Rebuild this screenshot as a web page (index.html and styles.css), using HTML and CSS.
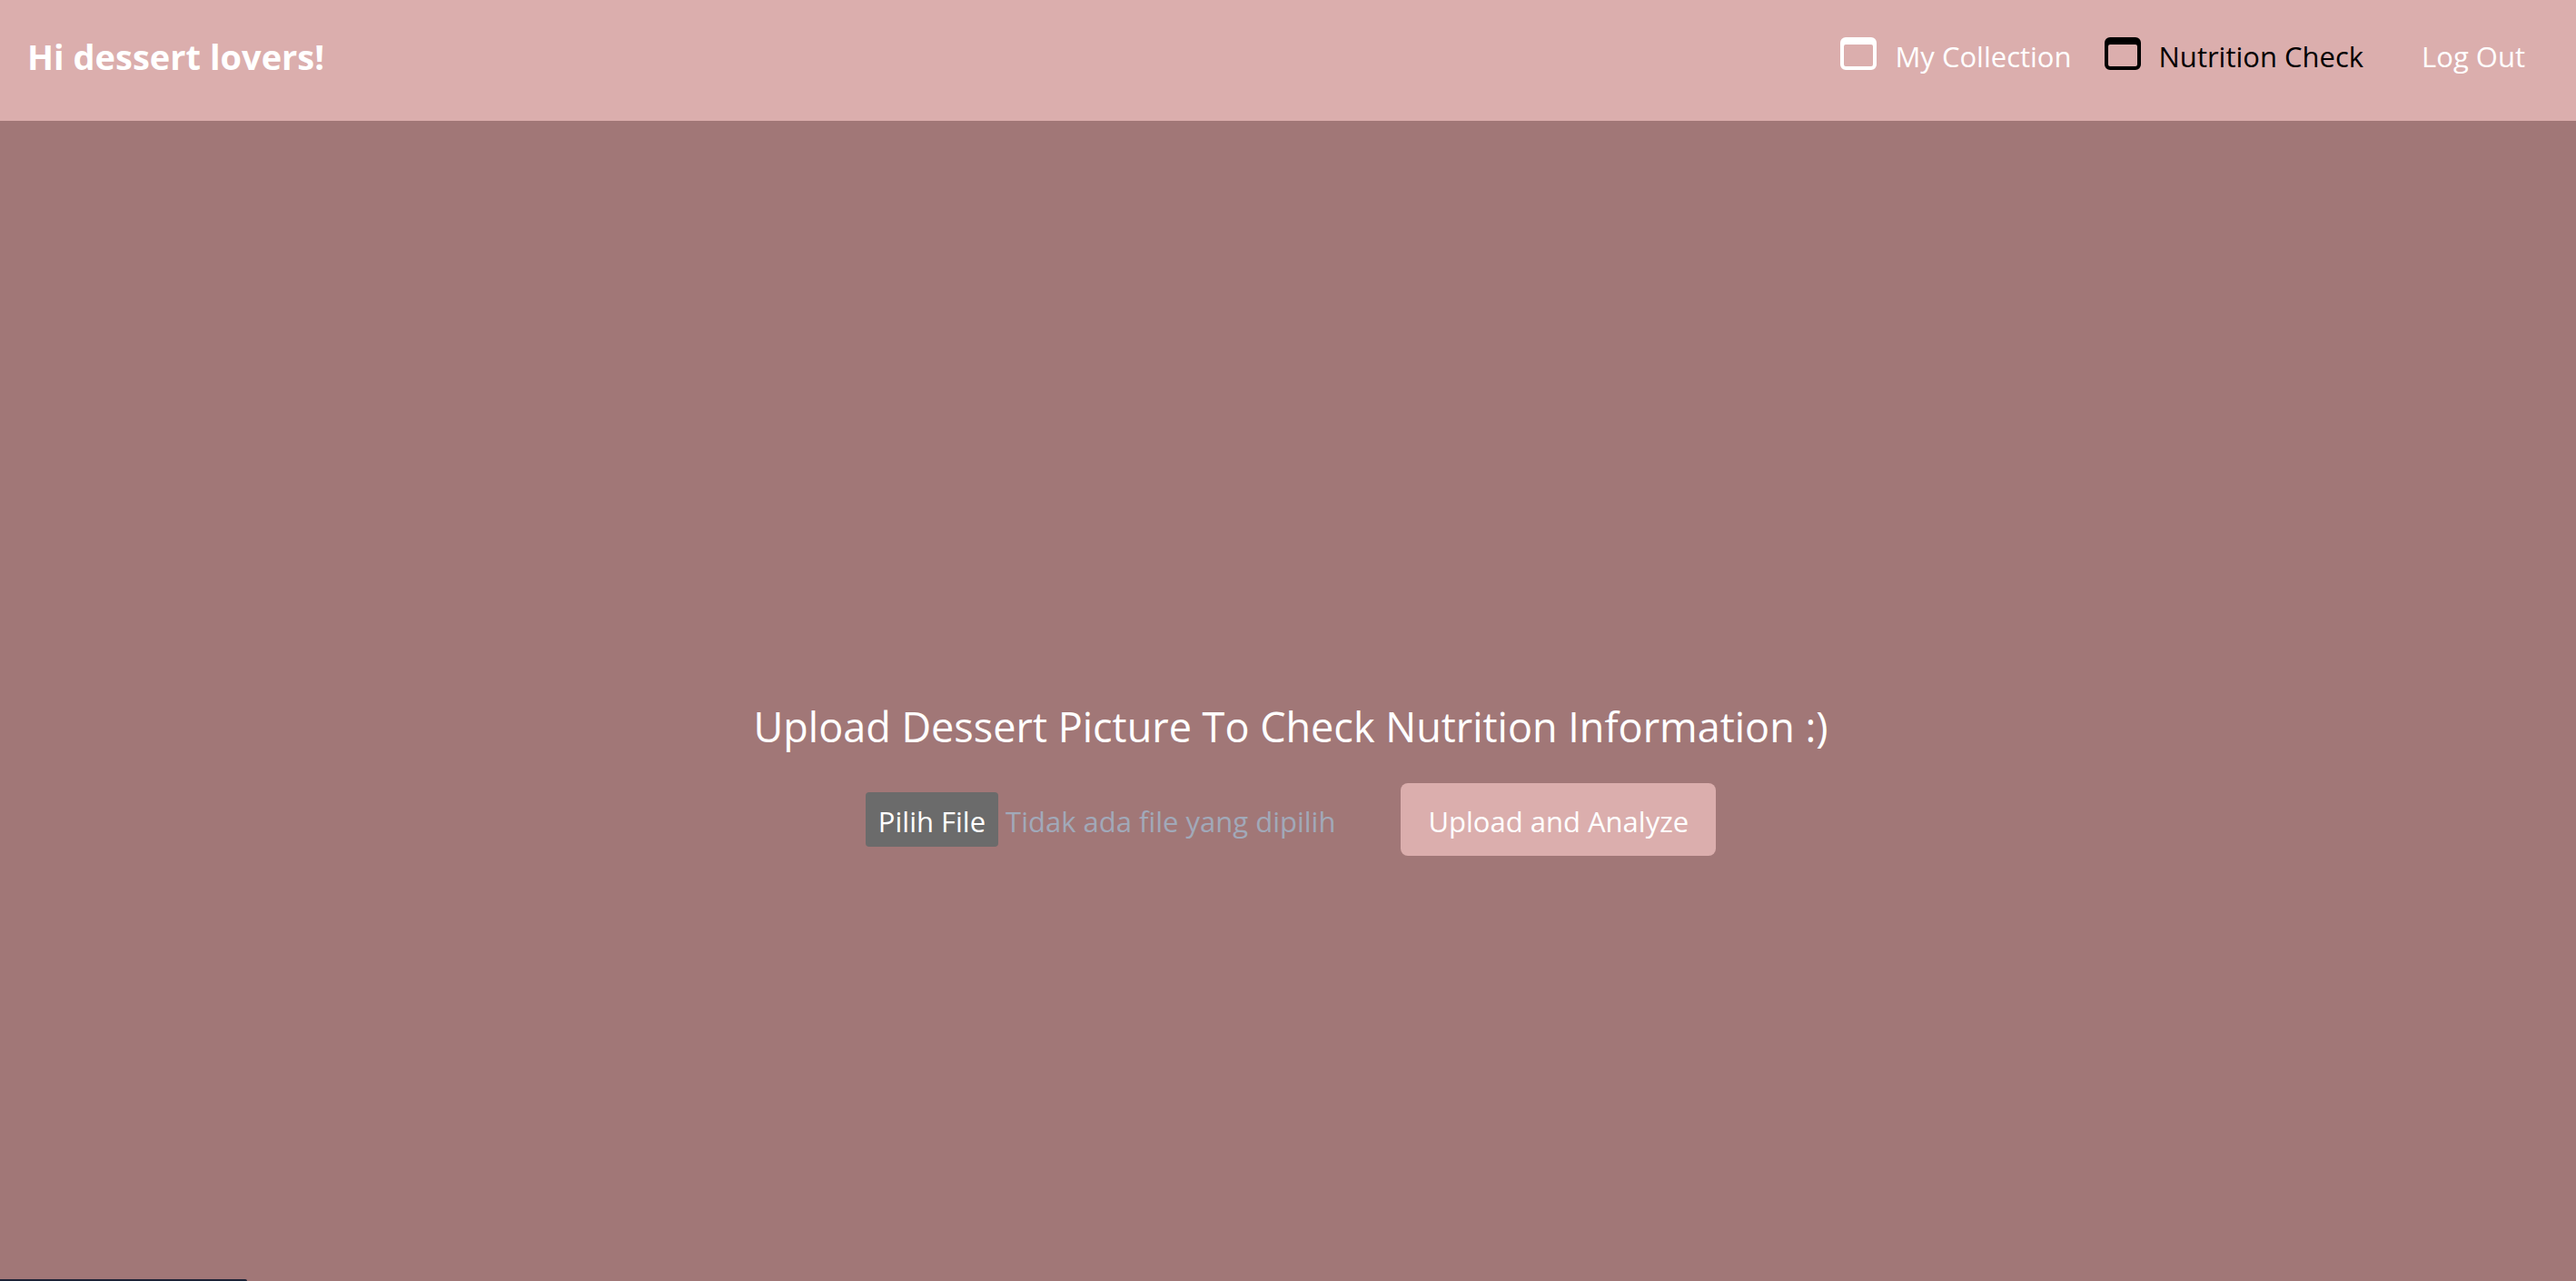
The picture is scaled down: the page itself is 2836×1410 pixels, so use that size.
FILE: index.html
```html
<!DOCTYPE html>
<html lang="en">
<head>
<meta charset="utf-8">
<meta name="viewport" content="width=device-width, initial-scale=1">
<title>Nutrition Check</title>
<link rel="stylesheet" href="styles.css">
</head>
<body>
<header class="topbar">
  <h1 class="brand">Hi dessert lovers!</h1>
  <nav class="nav">
    <a class="nav-link" href="#collection">
      <svg class="nav-icon" viewBox="0 0 40 36" aria-hidden="true"><path fill="currentColor" fill-rule="evenodd" d="M6 0h28a6 6 0 0 1 6 6v24a6 6 0 0 1-6 6H6a6 6 0 0 1-6-6V6a6 6 0 0 1 6-6zM6 8a2 2 0 0 0-2 2v20a2 2 0 0 0 2 2h28a2 2 0 0 0 2-2V10a2 2 0 0 0-2-2z"/></svg>
      <span class="nav-text">My Collection</span>
    </a>
    <a class="nav-link nav-link-active" href="#nutrition" aria-current="page">
      <svg class="nav-icon" viewBox="0 0 40 36" aria-hidden="true"><path fill="currentColor" fill-rule="evenodd" d="M6 0h28a6 6 0 0 1 6 6v24a6 6 0 0 1-6 6H6a6 6 0 0 1-6-6V6a6 6 0 0 1 6-6zM6 8a2 2 0 0 0-2 2v20a2 2 0 0 0 2 2h28a2 2 0 0 0 2-2V10a2 2 0 0 0-2-2z"/></svg>
      <span class="nav-text">Nutrition Check</span>
    </a>
    <a class="nav-link nav-logout" href="#logout"><span class="nav-text">Log Out</span></a>
  </nav>
</header>
<main class="content">
  <h2 class="title">Upload Dessert Picture To Check Nutrition Information :)</h2>
  <form class="upload">
    <div class="picker">
      <input class="picker-input" type="file" id="picture" accept="image/*">
      <label class="picker-button" for="picture">Pilih File</label>
      <span class="picker-status">Tidak ada file yang dipilih</span>
    </div>
    <button class="submit" type="button">Upload and Analyze</button>
  </form>
</main>
<div class="status-edge"></div>
</body>
</html>
```
FILE: styles.css
```css
* {
  box-sizing: border-box;
}

body {
  margin: 0;
  min-height: 100vh;
  display: flex;
  flex-direction: column;
  background: #a17777;
  color: #fff;
  font-family: "Segoe UI", "Open Sans", "Noto Sans", sans-serif;
  font-size: 31px;
  line-height: 48px;
}

.topbar {
  display: flex;
  align-items: flex-start;
  justify-content: space-between;
  padding: 38px 56px 47px 30px;
  background: #dbaead;
}

.brand {
  margin: 0;
  font-size: 38px;
  font-weight: 700;
  line-height: 48px;
}

.nav {
  display: flex;
  gap: 36px;
}

.nav-link {
  display: flex;
  align-items: center;
  gap: 20px;
  color: #fff;
  text-decoration: none;
}

.nav-link-active {
  color: #000;
}

.nav-logout {
  margin-left: 28px;
}

.nav-icon {
  width: 40px;
  height: 36px;
  margin-bottom: 6px;
}

.content {
  flex: 1;
  display: flex;
  flex-direction: column;
  align-items: center;
  justify-content: center;
  gap: 26px;
  padding: 162px 24px 0 30px;
}

.title {
  margin: 0;
  font-size: 45px;
  font-weight: 400;
  line-height: 72px;
}

.upload {
  display: flex;
  align-items: center;
  gap: 72px;
}

.picker {
  position: relative;
  display: flex;
  align-items: center;
  gap: 8px;
}

.picker-input {
  position: absolute;
  width: 1px;
  height: 1px;
  opacity: 0;
}

.picker-button {
  padding: 8px 14px 4px;
  border-radius: 4px;
  background: #6b6b6b;
  cursor: pointer;
}

.picker-status {
  padding-top: 4px;
  color: #a1a9b9;
}

.submit {
  padding: 18px 30px 14px;
  border: 0;
  border-radius: 8px;
  background: #dbaead;
  color: inherit;
  font: inherit;
  cursor: pointer;
}

.status-edge {
  position: fixed;
  left: 0;
  bottom: 0;
  width: 272px;
  height: 2px;
  border-top-right-radius: 2px;
  background: #1c2236;
}
```
